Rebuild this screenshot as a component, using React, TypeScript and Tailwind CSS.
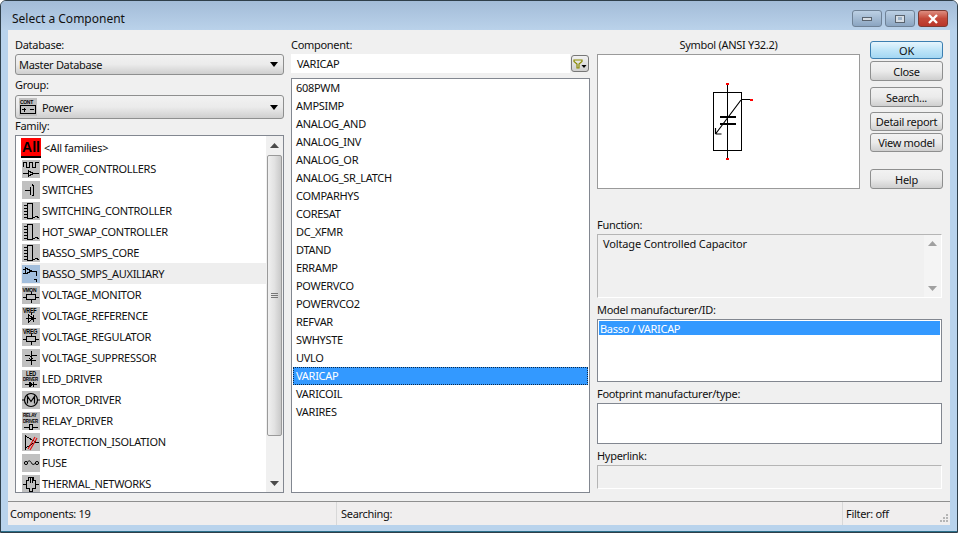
import type { ReactNode } from "react";

const FONT = "font-['Noto_Sans',sans-serif]";

const components = [
  "608PWM", "AMPSIMP", "ANALOG_AND", "ANALOG_INV", "ANALOG_OR", "ANALOG_SR_LATCH", "COMPARHYS", "CORESAT",
  "DC_XFMR", "DTAND", "ERRAMP", "POWERVCO", "POWERVCO2", "REFVAR", "SWHYSTE", "UVLO", "VARICAP", "VARICOIL", "VARIRES",
];

function Tile({ children, active }: { children: ReactNode; active?: boolean }) {
  return (
    <svg width="18" height="18" viewBox="0 0 18 18" fill="none" stroke="#000" strokeWidth="1" shapeRendering="crispEdges" className={active ? "bg-[#a3bfdd] shrink-0" : "bg-[#c0c0c0] shrink-0"}>
      {children}
    </svg>
  );
}

// small label inside an icon tile, stretched upward so it stays legible
function Tiny({ x, y, size = 5.4, children }: { x: number; y: number; size?: number; children: string }) {
  return (
    <text transform={`translate(${x} ${y}) scale(1 1.25)`} fontSize={size} fontWeight="700" fontFamily="Liberation Sans, sans-serif" fill="#000" stroke="none">
      {children}
    </text>
  );
}

const chip = (
  <path d="M5.500 1.500h5v15h-5zM2 3.500h3M2 6.500h3M2 9.500h3M2 12.500h3M2 15.500h3M11 15.500h2M13 14h2v2M15 15.500h2" />
);

const families: { name: string; icon: ReactNode; active?: boolean }[] = [
  { name: "POWER_CONTROLLERS", icon: <path d="M1.500 7V2.500h3V7h3V2.500h3V7h3V2.500h3M1 13.500h5M6.500 11v5l5-2.500zM11.500 13.500h5" /> },
  { name: "SWITCHES", icon: <path d="M3 9.500h5M8.500 5.500v8M10.500 3.500l1 2v8l-1 2M11 9.500h1" /> },
  { name: "SWITCHING_CONTROLLER", icon: chip },
  { name: "HOT_SWAP_CONTROLLER", icon: chip },
  { name: "BASSO_SMPS_CORE", icon: chip },
  { name: "BASSO_SMPS_AUXILIARY", active: true, icon: <path d="M3.500 2v7M3.500 3l6 3-6 3M1 4h2M1 8h2M9.500 6h5v5M12 14h2v3" /> },
  { name: "VOLTAGE_MONITOR", icon: <><Tiny x={0.5} y={6} size={5}>VMON</Tiny><path d="M4.500 8.500h9v5h-9zM9 6v2M1 11h3M14 11h3M9 14v3" /></> },
  { name: "VOLTAGE_REFERENCE", icon: <><Tiny x={1} y={6}>VREF</Tiny><path d="M4 11.500h10M6.500 8v7l5-3.500zM11.500 8v7M9 6v2" /></> },
  { name: "VOLTAGE_REGULATOR", icon: <><Tiny x={1} y={6}>VREG</Tiny><path d="M4.500 8.500h9v5h-9zM9 6v2M1 11h3M14 11h3M9 14v3" /></> },
  { name: "VOLTAGE_SUPPRESSOR", icon: <path d="M3 6.500h4l2 1 2-1h4M9 2v14M4 11.500h10M7 9l2 2.500 2-2.500" /> },
  { name: "LED_DRIVER", icon: <><Tiny x={4} y={5.500}>LED</Tiny><Tiny x={1} y={11} size={4.400}>DRIVER</Tiny><path d="M3 14.500h12M7 12v5l4-2.500zM11 12v5" /></> },
  { name: "MOTOR_DRIVER", icon: <><circle cx="9" cy="9" r="6.500" strokeWidth="1.200" shapeRendering="auto" /><path d="M0 9h2.500M15.500 9H18M5.500 12.500v-7l3.500 5 3.500-5v7" strokeWidth="1.200" shapeRendering="auto" /></> },
  { name: "RELAY_DRIVER", icon: <><Tiny x={1} y={5} size={4.600}>RELAY</Tiny><Tiny x={1} y={11} size={4.400}>DRIVER</Tiny><path d="M2 15h5M11 15h5M7.500 12.500h3v5h-3z" /></> },
  { name: "PROTECTION_ISOLATION", icon: <><path d="M3.500 1.500v15M3.500 3l10 6-10 6M13 9h4" /><path d="M6 16L13 4M8 17L15 5" stroke="#e01010" strokeWidth="1.200" shapeRendering="auto" /></> },
  { name: "FUSE", icon: <><circle cx="4" cy="9" r="1.600" shapeRendering="auto" /><circle cx="15" cy="9" r="1.600" shapeRendering="auto" /><path d="M5.500 8c2-2 3-1 4 1s2 2 4 0" shapeRendering="auto" /></> },
  { name: "THERMAL_NETWORKS", icon: <path d="M4.500 5.500h2V2h5v3.500h2v8h-3v3h-3v-3h-3zM1 9.500h3M14 9.500h3M8 3v5M10.500 3v5" /> },
];

function Caret() {
  return <span className="w-0 h-0 border-x-[4px] border-x-transparent border-t-[5px] border-t-black shrink-0" />;
}

function Combo({ height, children }: { height: string; children: ReactNode }) {
  return (
    <div className={`${height} flex items-center justify-between pl-[3px] pr-[5px] border border-[#8e8f8f] rounded-[3px] bg-gradient-to-b from-[#f2f2f2] via-[#ebebeb] to-[#cfcfcf]`}>
      {children}
      <Caret />
    </div>
  );
}

function Btn({ label, cls, primary }: { label: string; cls: string; primary?: boolean }) {
  return (
    <div
      className={`${cls} w-[73px] flex items-center justify-center rounded-[3px] border text-[#111] ${
        primary
          ? "border-[#3c7fb1] bg-gradient-to-b from-[#e6f5fd] via-[#bfe5f8] to-[#a3d7f3]"
          : "border-[#8e8f8f] bg-gradient-to-b from-[#f2f2f2] via-[#ebebeb] to-[#cfcfcf]"
      }`}
    >
      {label}
    </div>
  );
}

function ArrowUp({ color = "#4a4a4a" }: { color?: string }) {
  return <svg width="9" height="5" viewBox="0 0 9 5"><path d="M4.500 0L9 5H0z" fill={color} /></svg>;
}

function ArrowDown({ color = "#4a4a4a" }: { color?: string }) {
  return <svg width="9" height="5" viewBox="0 0 9 5"><path d="M0 0h9L4.500 5z" fill={color} /></svg>;
}

function WinBtn({ cls, children }: { cls: string; children: ReactNode }) {
  return <div className={`${cls} w-[30px] h-[17px] flex items-center justify-center rounded-[3px] border border-[#6f8296]`}>{children}</div>;
}

function Symbol() {
  return (
    <svg width="70" height="90" viewBox="0 0 70 90" fill="none" stroke="#000" shapeRendering="crispEdges">
      <path d="M23.500 17.500h28v58h-28z" />
      <path d="M37.500 9v75" />
      <path d="M30 42h16M30 49h16" strokeWidth="2" />
      <path d="M51.500 24.500h9" />
      <path d="M51 25L25.500 59M25.500 59v-6M25.500 59h6" strokeWidth="1.200" shapeRendering="auto" />
      <path d="M36 8h3v2h-3zM36 83h3v2h-3zM60 24h3v2h-3z" fill="#f00" stroke="none" />
    </svg>
  );
}

export default function App() {
  return (
    <div className={`${FONT} w-[958px] h-[533px] overflow-hidden text-[11px] tracking-[-0.3px] leading-none text-[#111] bg-[#b9d3ec] flex flex-col border border-[#2f3f4a] rounded-t-[6px]`}>
      {/* title bar */}
      <div className="h-[29px] shrink-0 flex items-center pt-[6px] pl-[11px] pr-[9px] bg-gradient-to-b from-[#a3bcd8] to-[#bad2ea]">
        <span className="text-[12px] tracking-normal flex-1 text-[#111]">Select a Component</span>
        <div className="flex gap-[3px]">
          <WinBtn cls="bg-gradient-to-b from-[#bcd0e4] to-[#8ba5c1]">
            <span className="w-[10px] h-[4px] bg-[#d6dde4] border border-[#59636e]" />
          </WinBtn>
          <WinBtn cls="bg-gradient-to-b from-[#bcd0e4] to-[#8ba5c1]">
            <span className="w-[10px] h-[8px] bg-[#d6dde4] border border-[#59636e] flex items-center justify-center"><span className="w-[4px] h-[3px] bg-[#9cb2c8]" /></span>
          </WinBtn>
          <WinBtn cls="border-[#7c3a32] bg-gradient-to-b from-[#dd8c80] via-[#c4493a] to-[#b9362a]">
            <svg width="12" height="10" viewBox="0 0 12 10"><path d="M2 1l8 8M10 1L2 9" stroke="#fff" strokeWidth="2.400" /></svg>
          </WinBtn>
        </div>
      </div>

      {/* client area */}
      <div className="mx-[7px] h-[495px] shrink-0 bg-[#f0f0f0] flex flex-col">
        <div className="flex-1 flex pl-[7px] gap-[6px] min-h-0">
          {/* left column */}
          <div className="w-[269px] flex flex-col">
            <div className="h-[24px] flex items-end pb-[4px]">Database:</div>
            <Combo height="h-[21px]"><span>Master Database</span></Combo>
            <div className="h-[20px] flex items-end pb-[5px]">Group:</div>
            <Combo height="h-[24px]">
              <span className="flex items-center gap-[5px]">
                <svg width="18" height="18" viewBox="0 0 18 18" fill="none" stroke="#000" shapeRendering="crispEdges" className="bg-[#c0c0c0]">
                  <Tiny x={1} y={5.500} size={5}>CONT</Tiny>
                  <path d="M1.500 7.500h15v8h-15zM3 11.500h4M5 9.500v4M11 11.500h4" />
                </svg>
                Power
              </span>
            </Combo>
            <div className="h-[16px] flex items-end pb-[4px]">Family:</div>
            <div className="h-[358px] bg-white border border-[#828790] flex">
              <div className="flex-1 min-w-0 overflow-hidden pl-[5px] pt-px">
                <div className="h-[21px] flex items-center">
                  <span className="w-[20px] h-[20px] bg-[#ff0000] border-b-2 border-black flex items-center justify-center text-[14px] tracking-normal font-bold text-black font-['Liberation_Sans',sans-serif]">All</span>
                  <span className="ml-[3px]">&lt;All families&gt;</span>
                </div>
                {families.map((f) => (
                  <div key={f.name} className={`h-[21px] pl-px flex items-center gap-[2px] ${f.active ? "bg-[#eeeeee]" : ""}`}>
                    <Tile active={f.active}>{f.icon}</Tile>
                    <span className="whitespace-nowrap">{f.name}</span>
                  </div>
                ))}
              </div>
              <div className="w-[17px] shrink-0 bg-[#f0f0f0] flex flex-col items-center">
                <div className="h-[19px] shrink-0 flex items-center justify-center"><ArrowUp /></div>
                <div className="w-[15px] h-[281px] shrink-0 rounded-[2px] border border-[#9a9a9a] bg-gradient-to-r from-[#f0f0f0] via-[#e2e2e2] to-[#c9c9c9] flex flex-col items-center justify-center gap-[1px]">
                  <span className="w-[7px] h-px bg-[#777]" />
                  <span className="w-[7px] h-px bg-[#777]" />
                  <span className="w-[7px] h-px bg-[#777]" />
                </div>
                <div className="flex-1 flex items-end justify-center pb-[6px]"><ArrowDown /></div>
              </div>
            </div>
          </div>

          {/* middle column */}
          <div className="w-[299px] ml-px flex flex-col">
            <div className="h-[24px] flex items-end pb-[4px]">Component:</div>
            <div className="h-[19px] flex gap-px">
              <div className="w-[279px] bg-white pl-[6px] flex items-center">VARICAP</div>
              <div className="w-[18px] h-[17px] mt-px rounded-[3px] border border-[#777] bg-gradient-to-b from-[#f2f2f2] to-[#cfcfcf] flex items-center justify-center">
                <svg width="14" height="10" viewBox="0 0 14 10">
                  <path d="M1 1h8v1.500L6 5v4H4V5L1 2.500z" fill="none" stroke="#8a8a00" strokeWidth="1.200" />
                  <path d="M8.500 6h5L11 9z" fill="#000" />
                </svg>
              </div>
            </div>
            <div className="h-[415px] mt-[5px] bg-white border border-[#828790] px-px">
              {components.map((c) => (
                <div key={c} className={`h-[18px] pl-[3px] pb-[2px] flex items-center ${c === "VARICAP" ? "bg-[#3399ff] text-white outline outline-1 -outline-offset-1 outline-dotted outline-[#0b2a4a]" : ""}`}>
                  {c}
                </div>
              ))}
            </div>
          </div>

          {/* right column */}
          <div className="w-[346px] ml-px flex flex-col">
            <div className="flex gap-[10px]">
              <div className="w-[263px]">
                <div className="h-[24px] flex items-end justify-center pb-[4px]">Symbol (ANSI Y32.2)</div>
                <div className="h-[135px] bg-white border border-[#9a9a9a] flex items-center justify-center pr-[7px] pb-[3px]"><Symbol /></div>
              </div>
              <div className="pt-[11px] flex flex-col">
                <Btn label="OK" cls="h-[18px]" primary />
                <Btn label="Close" cls="h-[20px] mt-[2px]" />
                <Btn label="Search..." cls="h-[20px] mt-[6px]" />
                <Btn label="Detail report" cls="h-[19px] mt-[5px]" />
                <Btn label="View model" cls="h-[19px] mt-[2px]" />
                <Btn label="Help" cls="h-[20px] mt-[17px]" />
              </div>
            </div>
            <div className="h-[45px] flex items-end pb-[4px]">Function:</div>
            <div className="h-[64px] mr-px border border-[#b5b5b5] border-b-white border-r-white flex">
              <div className="flex-1 pl-[5px] pt-[3px] tracking-[-0.15px]">Voltage Controlled Capacitor</div>
              <div className="w-[17px] flex flex-col items-center justify-between py-[6px] bg-[#f4f4f4]"><ArrowUp color="#a0a0a0" /><ArrowDown color="#a0a0a0" /></div>
            </div>
            <div className="h-[21px] flex items-end pb-[4px]">Model manufacturer/ID:</div>
            <div className="h-[63px] mr-px bg-white border border-[#828790] p-px">
              <div className="h-[14px] bg-[#3399ff] text-white pl-px flex items-center">Basso / VARICAP</div>
            </div>
            <div className="h-[21px] flex items-end pb-[4px]">Footprint manufacturer/type:</div>
            <div className="h-[41px] mr-px bg-white border border-[#828790]" />
            <div className="h-[21px] flex items-end pb-[4px]">Hyperlink:</div>
            <div className="h-[24px] mr-px border border-[#b5b5b5] border-b-white border-r-white" />
          </div>
        </div>

        {/* status bar */}
        <div className="h-[24px] shrink-0 border-t border-[#8f8f8f] bg-[#f0eeee] flex items-center">
          <div className="w-[329px] h-full pl-[2px] flex items-center border-r border-[#d8d8d8]">Components: 19</div>
          <div className="w-[506px] h-full pl-[4px] flex items-center border-r border-[#d8d8d8]">Searching:</div>
          <div className="flex-1 h-full pl-[3px] flex items-center justify-between pr-px">
            <span>Filter: off</span>
            <svg width="10" height="10" viewBox="0 0 10 10" className="self-end mb-[2px]"><path d="M7 1h2v2H7zM4 4h2v2H4zM7 4h2v2H7zM1 7h2v2H1zM4 7h2v2H4zM7 7h2v2H7z" fill="#b5b5b5" /></svg>
          </div>
        </div>
      </div>
      <div className="flex-1 border-b border-[#2a6f8a]" />
    </div>
  );
}
